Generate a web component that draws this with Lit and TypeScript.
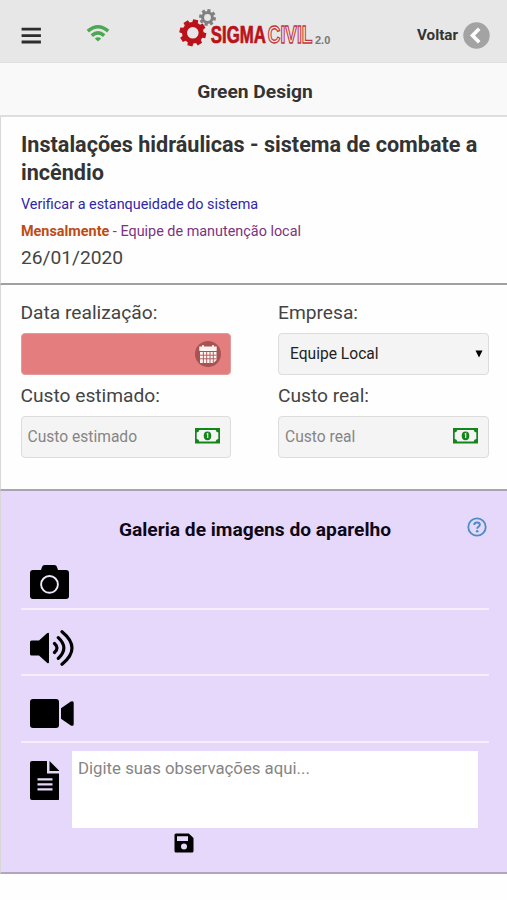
import { LitElement, html, css, svg } from "lit";
import { customElement, property } from "lit/decorators.js";

function gear(cx: number, cy: number, outer: number, inner: number, hole: number, turn: number) {
  const teeth = 8;
  const step = (Math.PI * 2) / teeth;
  const pts: string[] = [];
  const at = (r: number, a: number) =>
    `${(cx + r * Math.cos(a)).toFixed(2)} ${(cy + r * Math.sin(a)).toFixed(2)}`;
  for (let i = 0; i < teeth; i++) {
    const a = turn + i * step;
    pts.push(at(inner, a - step * 0.34), at(outer, a - step * 0.24), at(outer, a + step * 0.24), at(inner, a + step * 0.34));
  }
  return `M${pts.join("L")}ZM${cx + hole} ${cy}a${hole} ${hole} 0 1 0 ${-2 * hole} 0a${hole} ${hole} 0 1 0 ${2 * hole} 0Z`;
}

const money = svg`
  <path fill="#15851b" fill-rule="evenodd" d="M0 0H25V15.5H0ZM4.3 2A3 3 0 0 1 1.7 4.6V10.9A3 3 0 0 1 4.3 13.6H20.7A3 3 0 0 1 23.3 10.9V4.6A3 3 0 0 1 20.7 2Z"/>
  <ellipse cx="12.5" cy="7.8" rx="3.8" ry="4.4" fill="#15851b"/>
  <path d="M11.7 6.2L12.7 5.6V10" fill="none" stroke="#e4f3e4" stroke-width="1.2"/>`;

@customElement("sc-logo")
class ScLogo extends LitElement {
  static styles = css`
    :host { display: block; }
    svg { display: block; }
    .sigma { font: 700 23px "Liberation Sans", sans-serif; fill: #bb1119; stroke: #bb1119; stroke-width: 0.7; }
    .civil { font: 700 23px "Liberation Sans", sans-serif; fill: #f6eaea; stroke: #c4363c; stroke-width: 1.3; }
    .version { font: 700 10.5px "Liberation Sans", sans-serif; fill: #777; }
  `;
  render() {
    return html`<svg width="154" height="42" viewBox="178 7 154 42">
      <path fill="#808080" fill-rule="evenodd" d=${gear(207.5, 17.5, 8.6, 6.3, 3.4, 0.2)} />
      <path fill="#bb1119" fill-rule="evenodd" d=${gear(192.8, 32.8, 13.6, 10.8, 5.8, 0.22)} />
      <text class="sigma" transform="translate(210.8 43) scale(0.73 1)">SIGMA</text>
      <text class="civil" transform="translate(267.8 43) scale(0.76 1)">CIVIL</text>
      <text class="version" transform="translate(315 43.5) scale(1.05 1)">2.0</text>
    </svg>`;
  }
}

@customElement("cost-field")
class CostField extends LitElement {
  @property() label = "";
  static styles = css`
    :host { display: block; }
    .box { box-sizing: border-box; height: 42px; display: flex; align-items: center; border: 1px solid #dcdcdc; border-radius: 4px; background: #f4f4f4; padding: 0 10px 0 6px; }
    .entry { flex: 1; min-width: 0; border: 0; padding: 0; background: none; outline: none; font: 15.6px Roboto, sans-serif; }
    .entry::placeholder { color: #858585; opacity: 1; }
    svg { display: block; margin-top: -2px; }
  `;
  render() {
    return html`<div class="box">
      <input class="entry" placeholder=${this.label} />
      <svg width="25" height="15.5" viewBox="0 0 25 15.5">${money}</svg>
    </div>`;
  }
}

@customElement("app-root")
class AppRoot extends LitElement {
  static styles = css`
    :host { display: block; width: 507px; height: 900px; overflow: hidden; background: #fefefe; color: #333; font-family: Roboto, sans-serif; }
    svg { display: block; }
    .page { display: grid; grid-template-rows: 63px 54px 168px 206px 383px; box-sizing: border-box; }
    .page > * { box-sizing: border-box; }
    .bar { display: flex; align-items: center; background: #e7e7e7; border-bottom: 1px solid #dedede; padding: 8px 17px 0 21px; }
    .wifi { margin: -4px 0 0 45px; }
    .logo { margin: -14px 0 0 68px; }
    .back { display: flex; align-items: center; gap: 5px; margin-left: auto; font-size: 15.2px; font-weight: 700; }
    .name { display: flex; align-items: center; justify-content: center; padding: 5px 0 0 3px; background: #f9f9f9; border-bottom: 2px solid #dedede; font-size: 19.2px; font-weight: 700; }
    .task, .form, .gallery { border-left: 1px solid #d8d8d8; }
    .task { padding: 14px 0 0 20px; border-bottom: 2px solid #a0a0a0; }
    .heading { margin: 0; font-size: 21.6px; line-height: 28px; font-weight: 700; white-space: nowrap; }
    .check { margin-top: 4px; font-size: 14.4px; line-height: 27px; color: #2f27a8; }
    .cycle { font-size: 14.4px; line-height: 27px; color: #7b337f; }
    .often { color: #bd4b14; }
    .date { font-size: 19.2px; line-height: 26px; color: #444; }
    .form { display: grid; grid-template-columns: 210.5px 211px; column-gap: 47px; align-content: start; padding: 12px 0 0 19.5px; border-bottom: 2px solid #aaa3b2; }
    .label { font-size: 19.2px; line-height: 31px; height: 36px; color: #444; }
    .slot { height: 47px; }
    .day { box-sizing: border-box; height: 42px; border: 1px solid #e59a9a; border-radius: 4px; background: #e47e7e; display: flex; align-items: center; justify-content: flex-end; padding-right: 9px; }
    .company { display: grid; align-items: center; height: 42px; }
    .pick { grid-area: 1 / 1; appearance: none; box-sizing: border-box; width: 100%; height: 42px; border: 1px solid #dcdcdc; border-radius: 4px; background: #f4f4f4; padding: 0 0 0 11px; color: #222; font: 15.6px Roboto, sans-serif; }
    .caret { grid-area: 1 / 1; justify-self: end; margin: -1px 6px 0 0; pointer-events: none; }
    .gallery { display: flex; flex-direction: column; background: #e6d8fa; border-bottom: 2px solid #b0a6be; padding: 0 18px 0 20px; }
    .top { display: grid; grid-template-columns: 28px 1fr 28px; align-items: center; height: 75px; flex: none; }
    .top-name { margin: 2px 0 0; text-align: center; color: #0d0818; font-size: 19.2px; font-weight: 700; white-space: nowrap; }
    .help { justify-self: end; margin: -4px 2px 0 0; }
    .media { box-sizing: border-box; display: flex; align-items: center; height: 66.3px; flex: none; border-bottom: 2px solid #f6eefe; padding: 11px 0 0 9px; }
    .first { height: 44px; padding: 0 0 10px 9px; }
    .notes { display: flex; height: 77px; margin-top: 8px; padding: 0 11px 0 8.5px; flex: none; }
    .sheet { margin-top: 10px; }
    .text { box-sizing: border-box; flex: 1; margin-left: 13px; border: 0; outline: none; resize: none; background: #fff; padding: 8px 6px; font: 16.8px/19px Roboto, sans-serif; }
    .text::placeholder { color: #858585; opacity: 1; }
    .save { margin: 5px 0 0 152.5px; }
  `;

  render() {
    return html`<main class="page">
      <header class="bar">
        <svg width="20" height="18" viewBox="0 0 20 18"><path d="M2 3.2H18.5M2 9.6H18.5M2 16H18.5" stroke="#2d2d2d" stroke-width="2.8" stroke-linecap="square"/></svg>
        <svg class="wifi" width="24" height="18" viewBox="0 0 24 18" fill="none" stroke="#4ea754" stroke-width="3.5">
          <path d="M1.8 7.2Q12 -1.6 22.2 7.2M5.8 11.6Q12 6 18.2 11.6"/><path d="M8.8 14.4Q12 12 15.2 14.4L12 17.4Z" fill="#4ea754" stroke="none"/>
        </svg>
        <sc-logo class="logo"></sc-logo>
        <div class="back"><span>Voltar</span>
          <svg width="27" height="27" viewBox="0 0 27 27"><circle cx="13.5" cy="13.5" r="13.2" fill="#a3a3a3"/><path d="M16.2 6.8L9.5 13.5L16.2 20.2" fill="none" stroke="#fff" stroke-width="3.6"/></svg>
        </div>
      </header>
      <div class="name">Green Design</div>
      <section class="task">
        <h1 class="heading">Instalações hidráulicas - sistema de combate a<br />incêndio</h1>
        <div class="check">Verificar a estanqueidade do sistema</div>
        <div class="cycle"><b class="often">Mensalmente</b> - Equipe de manutenção local</div>
        <div class="date">26/01/2020</div>
      </section>
      <section class="form">
        <div class="label">Data realização:</div>
        <div class="label">Empresa:</div>
        <div class="slot"><div class="day">
          <svg width="26" height="26" viewBox="0 0 26 26"><circle cx="13" cy="13" r="13" fill="#a75353"/>
            <path fill="#fff4f2" d="M4.3 5.5H7V4.3H9V5.5H17V4.3H19V5.5H21.7V10H4.3Z"/>
            <path fill="#fff4f2" d="M5 11H21.5V19L18.5 22H5Z"/>
            <path d="M8.4 11V22M11.7 11V22M15 11V22M18.3 11V22M5 14.2H21.5M5 17.8H21.5" stroke="#a75353" stroke-width="0.9"/>
          </svg></div></div>
        <div class="slot"><div class="company">
          <select class="pick"><option>Equipe Local</option></select>
          <svg class="caret" width="8" height="8" viewBox="0 0 8 8"><path d="M0.5 0.5H7.5L4 7.5Z" fill="#000"/></svg>
        </div></div>
        <div class="label">Custo estimado:</div>
        <div class="label">Custo real:</div>
        <cost-field label="Custo estimado"></cost-field>
        <cost-field label="Custo real"></cost-field>
      </section>
      <section class="gallery">
        <div class="top"><span></span><h2 class="top-name">Galeria de imagens do aparelho</h2>
          <svg class="help" width="20" height="20" viewBox="0 0 20 20"><circle cx="10" cy="10" r="8.7" fill="none" stroke="#4b8cc6" stroke-width="1.8"/>
            <path d="M7.3 8Q7.3 5.6 10 5.6Q12.8 5.6 12.8 7.8Q12.8 9 11.3 9.9Q10.2 10.5 10.2 11.8" fill="none" stroke="#4b8cc6" stroke-width="2"/><circle cx="10.2" cy="14.3" r="1.3" fill="#4b8cc6"/></svg>
        </div>
        <div class="media first">
          <svg width="39" height="34" viewBox="0 0 39 34"><path d="M3 5H11L12.2 1.6Q12.8 0 14.5 0H24.5Q26.2 0 26.8 1.6L28 5H36Q39 5 39 8V31Q39 34 36 34H3Q0 34 0 31V8Q0 5 3 5Z"/><circle cx="19.5" cy="19.4" r="8.4" fill="none" stroke="#f0e8fa" stroke-width="1.9"/></svg>
        </div>
        <div class="media">
          <svg width="44" height="36" viewBox="0 0 44 36"><path d="M1.5 10.5H9L17 3.2Q19 1.8 19 4V32Q19 34.2 17 32.8L9 25.5H1.5Q0 25.5 0 24V12Q0 10.5 1.5 10.5Z"/><path d="M24.5 13.5Q29.5 18 24.5 22.5M28.3 7.7Q39.4 18 28.3 28.3M32 1.7Q52 18 32 34.3" fill="none" stroke="#000" stroke-width="3.2" stroke-linecap="round"/></svg>
        </div>
        <div class="media">
          <svg width="44" height="29" viewBox="0 0 44 29"><rect width="29" height="29" rx="3"/><path d="M31 9.3L40.8 2.6Q43.7 1.2 43.7 4V25Q43.7 27.8 40.8 26.4L31 19.7Z"/></svg>
        </div>
        <div class="notes">
          <svg class="sheet" width="29.5" height="39" viewBox="0 0 29.5 39"><path fill-rule="evenodd" d="M2 0H17V12.5H29.5V37Q29.5 39 27.5 39H2Q0 39 0 37V2Q0 0 2 0ZM7.5 17.3V19.5H22.5V17.3ZM7.5 22.3V24.5H22.5V22.3ZM7.5 27.3V29.5H22.5V27.3Z"/><path d="M19.5 0L29.5 10H19.5Z"/></svg>
          <textarea class="text" placeholder="Digite suas observações aqui..."></textarea>
        </div>
        <svg class="save" width="20" height="20" viewBox="0 0 20 20"><path fill-rule="evenodd" d="M2 .5H14.8L19.5 5V18Q19.5 19.5 18 19.5H2Q.5 19.5 .5 18V2Q.5 .5 2 .5ZM3 3.3V8H14V3.3ZM13 13.5A3 3 0 1 0 7 13.5A3 3 0 1 0 13 13.5Z"/></svg>
      </section>
    </main>`;
  }
}
